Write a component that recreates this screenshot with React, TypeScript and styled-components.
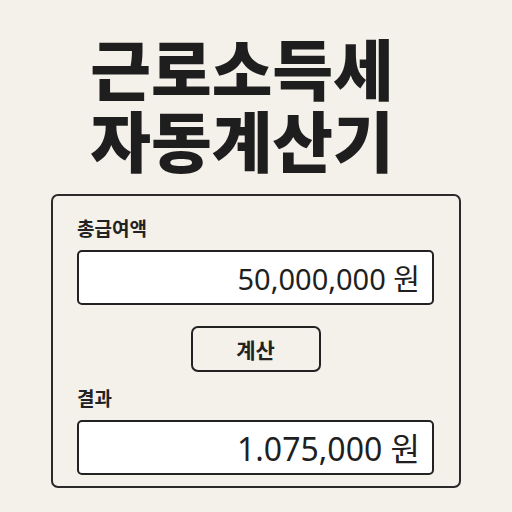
import { useState } from 'react';
import styled, { createGlobalStyle } from 'styled-components';

const GlobalStyle = createGlobalStyle`
	html, body {
		margin: 0;
		padding: 0;
		background: #f4f1eb;
	}
	body {
		font-family: "Noto Sans", "Noto Sans CJK KR", sans-serif;
		color: #1f1f1f;
	}
`;

const Page = styled.main`
	width: 512px;
	height: 512px;
	display: flex;
	flex-direction: column;
	align-items: center;
	box-sizing: border-box;
	padding-top: 30px;
`;

const Title = styled.h1`
	margin: 0 28px 0 0;
	font-family: "Noto Sans CJK KR", sans-serif;
	font-weight: 900;
	font-size: 66px;
	line-height: 72px;
	text-align: center;
	color: #1e1e1e;
`;

const Card = styled.section`
	margin-top: 20px;
	width: 410px;
	box-sizing: border-box;
	border: 2px solid #2a2a2a;
	border-radius: 7px;
	padding: 19px 25px 11px 24px;
	display: flex;
	flex-direction: column;
`;

const Label = styled.label`
	font-family: "Noto Sans CJK KR", sans-serif;
	font-weight: 700;
	font-size: 19px;
	line-height: 26px;
	margin-bottom: 9px;
	color: #222;
`;

const Field = styled.div<{ $big?: boolean }>`
	height: 55px;
	box-sizing: border-box;
	background: #fff;
	border: 2px solid #222;
	border-radius: 5px;
	display: flex;
	align-items: center;
	justify-content: flex-end;
	padding: 0 12px 2px;
	font-size: ${p => (p.$big ? '32px' : '29px')};
	color: #1f1f1f;
`;

const Button = styled.button`
	align-self: center;
	margin: 21px 0 13px;
	width: 130px;
	height: 46px;
	background: transparent;
	border: 2px solid #222;
	border-radius: 7px;
	font-family: "Noto Sans CJK KR", sans-serif;
	font-weight: 700;
	font-size: 21px;
	color: #222;
	cursor: pointer;
`;

// 간이 세율: 5천만 원 기준 1,075,000 원
const calcTax = (pay: number) => Math.round(pay * 0.0215);

const fmt = (n: number) => n.toLocaleString('en-US');

const App = () => {
	const [pay] = useState(50000000);
	const [tax, setTax] = useState(1075000);

	return (
		<Page>
			<GlobalStyle />
			<Title>
				근로소득세
				<br />
				자동계산기
			</Title>
			<Card>
				<Label>총급여액</Label>
				<Field>{fmt(pay)} 원</Field>
				<Button onClick={() => setTax(calcTax(pay))}>계산</Button>
				<Label>결과</Label>
				<Field $big>{fmt(tax).replace(',', '.')} 원</Field>
			</Card>
		</Page>
	);
};

export default App;
